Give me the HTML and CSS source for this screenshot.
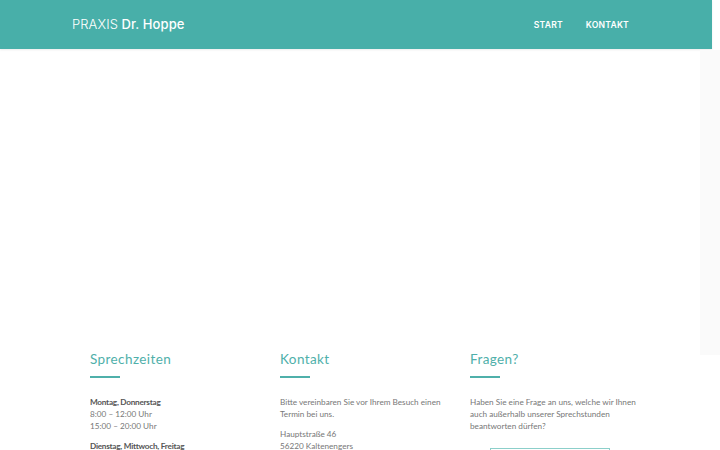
FILE: index.html
```html
<!DOCTYPE html>
<html lang="de">
<head>
  <meta charset="UTF-8" />
  <meta name="viewport" content="width=device-width, initial-scale=1" />
  <title>Praxis Dr. Hoppe</title>
  <link rel="stylesheet" href="styles.css">
</head>
<body>
  <header class="topbar">
    <div class="topbar-inner">
      <a class="brand" href="#"><span class="brand-light">PRAXIS</span> Dr. Hoppe</a>
      <nav class="menu">
        <a href="#">Start</a>
        <a href="#">Kontakt</a>
      </nav>
    </div>
  </header>

  <section class="hero"></section>
  <div class="side-shade"></div>

  <section class="info">
    <div class="col">
      <h2>Sprechzeiten</h2>
      <p><strong>Montag, Donnerstag</strong><br>8:00 – 12:00 Uhr<br>15:00 – 20:00 Uhr</p>
      <p><strong>Dienstag, Mittwoch, Freitag</strong><br>8:00 – 12:00 Uhr</p>
    </div>
    <div class="col">
      <h2>Kontakt</h2>
      <p>Bitte vereinbaren Sie vor Ihrem Besuch einen Termin bei uns.</p>
      <p>Hauptstraße 46<br>56220 Kaltenengers</p>
    </div>
    <div class="col">
      <h2>Fragen?</h2>
      <p>Haben Sie eine Frage an uns, welche wir Ihnen auch außerhalb unserer Sprechstunden beantworten dürfen?</p>
      <a class="btn" href="#">Schreiben Sie uns</a>
    </div>
  </section>
</body>
</html>
```
FILE: styles.css
```css
body {
  margin: 0;
  font-family: Lato, "Open Sans", sans-serif;
  background: #fff;
  color: #777;
  overflow: hidden;
}
.topbar {
  width: calc(100% - 8px);
  height: 49px;
  background: #48afa9;
  box-shadow: 0 1px 2px rgba(0,0,0,0.08);
}
.topbar-inner {
  box-sizing: border-box;
  height: 100%;
  padding: 0 83px 0 72px;
  display: flex;
  align-items: center;
  justify-content: space-between;
}
.brand {
  color: #fff;
  text-decoration: none;
  font-family: Inter, "Open Sans", sans-serif;
  font-size: 13px;
  font-weight: 500;
  letter-spacing: 0.1px;
  margin-top: -2px;
}
.brand-light {
  font-weight: 300;
}
.menu {
  display: flex;
  gap: 23px;
}
.menu a {
  color: #fff;
  text-decoration: none;
  text-transform: uppercase;
  font-family: Inter, "Open Sans", sans-serif;
  font-weight: 600;
  font-size: 8.6px;
  letter-spacing: 0.2px;
}
.hero {
  height: 286px;
}
.side-shade {
  position: absolute;
  top: 50px;
  right: 0;
  width: 20px;
  height: 305px;
  background: #fafafa;
}
.info {
  display: grid;
  grid-template-columns: repeat(3, 190px);
  padding-left: 90px;
}
.col {
  padding-right: 16px;
}
.col h2 {
  margin: 16px 0 0;
  font-size: 13.5px;
  font-weight: 400;
  color: #4fb0aa;
  letter-spacing: 0.4px;
}
.col h2::after {
  content: "";
  display: block;
  width: 30px;
  height: 2px;
  background: #4fb0aa;
  margin-top: 9px;
  margin-bottom: 18px;
}
.col p {
  margin: 0 0 8px;
  font-size: 8.2px;
  line-height: 12px;
}
.col strong {
  color: #555;
  font-weight: 700;
  letter-spacing: -0.25px;
}
.btn {
  display: block;
  margin: 16px 0 0 20px;
  width: 118px;
  border: 1px solid #8ccfca;
  padding: 8px 0;
  text-align: center;
  font-size: 9px;
  color: #4fb0aa;
  text-decoration: none;
}
```
